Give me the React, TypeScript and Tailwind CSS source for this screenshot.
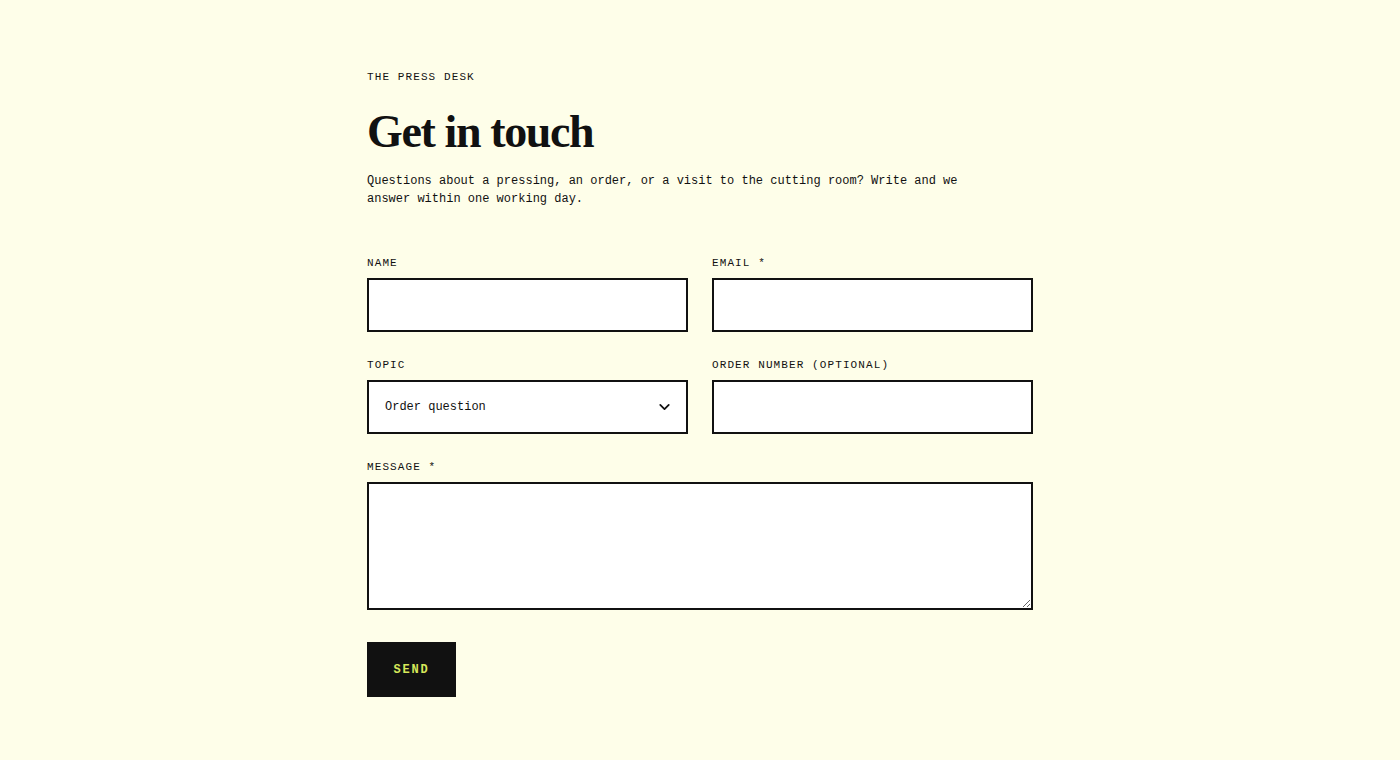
import { ChevronDown } from 'lucide-react';

const mono = { fontFamily: '"Liberation Mono", "DejaVu Sans Mono", monospace' };

function Label({ children }: { children: React.ReactNode }) {
  return (
    <label className="block text-[11px] leading-4 tracking-[0.1em] uppercase text-[#111] mb-[7px]">{children}</label>
  );
}

const field =
  'block w-full h-[54px] border-2 border-[#111] bg-white px-4 text-[12px] text-[#111] outline-none rounded-none';

export default function App() {
  return (
    <div className="min-h-[760px] bg-[#fefee9] text-[#111]" style={mono}>
      <div className="mx-auto w-[666px] pt-[69px] pb-16">
        <div className="text-[11px] leading-4 tracking-[0.1em] uppercase">The press desk</div>
        <h1
          className="mt-[24px] text-[46px] leading-none font-bold tracking-[-0.03em]"
          style={{ fontFamily: '"Liberation Serif", "DejaVu Serif", serif' }}
        >
          Get in touch
        </h1>
        <p className="mt-[17px] max-w-[600px] text-[12px] leading-[18px]">
          Questions about a pressing, an order, or a visit to the cutting room? Write and we answer within one working
          day.
        </p>

        <form className="mt-[47px] grid grid-cols-2 gap-x-6 gap-y-[25px]" onSubmit={(e) => e.preventDefault()}>
          <div>
            <Label>Name</Label>
            <input className={field} style={mono} />
          </div>
          <div>
            <Label>Email *</Label>
            <input className={field} style={mono} />
          </div>
          <div>
            <Label>Topic</Label>
            <div className="relative">
              <select className={field + ' appearance-none pr-10'} style={mono} defaultValue="order">
                <option value="order">Order question</option>
                <option value="pressing">Pressing</option>
                <option value="visit">Visit</option>
              </select>
              <ChevronDown
                className="pointer-events-none absolute right-[15px] top-1/2 -translate-y-1/2 w-[17px] h-[17px]"
                strokeWidth={2.5}
              />
            </div>
          </div>
          <div>
            <Label>Order number (optional)</Label>
            <input className={field} style={mono} />
          </div>
          <div className="col-span-2">
            <Label>Message *</Label>
            <textarea
              className="block w-full h-[128px] border-2 border-[#111] bg-white px-4 py-3 text-[12px] outline-none rounded-none"
              style={mono}
            />
          </div>
          <div className="col-span-2 mt-[7px]">
            <button
              type="submit"
              className="h-[55px] w-[89px] bg-[#111] text-[#d6e85a] text-[12px] font-bold tracking-[0.15em] uppercase"
              style={mono}
            >
              Send
            </button>
          </div>
        </form>
      </div>
    </div>
  );
}
